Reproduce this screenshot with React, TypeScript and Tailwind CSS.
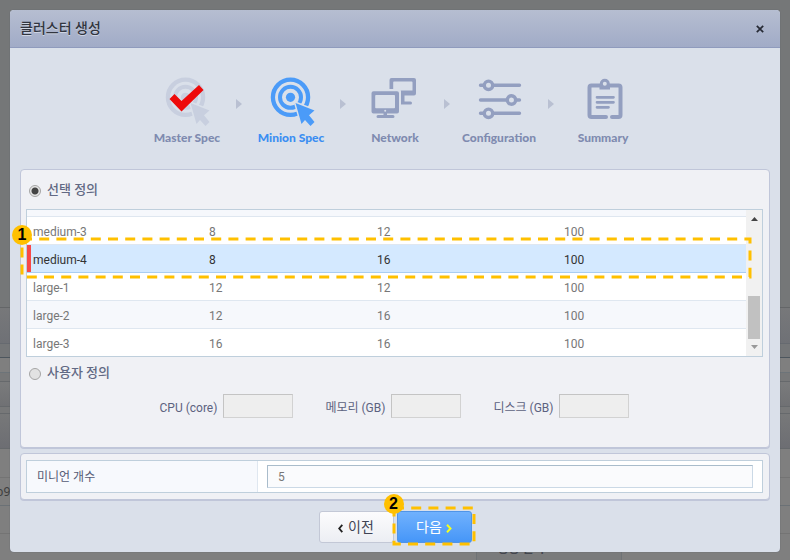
import React from "react";

const TEXT = "font-['Roboto','Noto_Sans_CJK_KR',sans-serif]";
const BG = "#dae0ea";

function Target({ color }: { color: string }) {
  return (
    <>
      <circle cx="23.5" cy="21.3" r="17.6" fill="none" stroke={color} strokeWidth="4.3" />
      <circle cx="23.5" cy="21.3" r="10.5" fill="none" stroke={color} strokeWidth="4" />
      <circle cx="23.5" cy="21.3" r="4.6" fill={color} />
      <path
        d="M28.5 27 47.5 34.5 42 39.3 47.5 46 43.5 50 38 44 34.5 48Z"
        fill={color}
        stroke={BG}
        strokeWidth="3"
        paintOrder="stroke"
      />
    </>
  );
}

function MasterIcon() {
  return (
    <g transform="translate(-1 0)">
      <Target color="#c8cfdf" />
      <path d="M7.500 23 12.500 18 19.500 25 37 9 41.500 14 19.500 35.500Z" fill="#ee0a0a" />
    </g>
  );
}

function NetworkIcon() {
  return (
    <g fill="#939fc0">
      <path
        fillRule="evenodd"
        d="M20.500 2H43a2 2 0 0 1 2 2V17.500a2 2 0 0 1-2 2H20.500a2 2 0 0 1-2-2V4a2 2 0 0 1 2-2ZM23 5.500a.8.8 0 0 0-.8.8V14.500H41.500V6.300a.8.8 0 0 0-.8-.8Z"
      />
      <path d="M30 19H33.500V25.500H39.500a1.500 1.500 0 0 1 0 3H30Z" />
      <path d="M-1 13H27.500a2.500 2.500 0 0 1 2.500 2.500V39H-1Z" fill={BG} />
      <path
        fillRule="evenodd"
        d="M2.500 15.300H26a2 2 0 0 1 2 2V35.500a2 2 0 0 1-2 2H2.500a2 2 0 0 1-2-2V17.300a2 2 0 0 1 2-2ZM5 19a.8.8 0 0 0-.8.8V31.500a.8.8 0 0 0 .8.8H23.200a.8.8 0 0 0 .8-.8V19.800a.8.8 0 0 0-.8-.8Z"
      />
      <path d="M12.500 37H16V39H22a1.500 1.500 0 0 1 0 3H7a1.500 1.500 0 0 1 0-3H12.500Z" />
      <circle cx="14.200" cy="34.800" r="1" fill={BG} />
    </g>
  );
}

function ConfigurationIcon() {
  return (
    <g stroke="#939fc0" strokeWidth="3.4" strokeLinecap="round" fill={BG}>
      <path d="M5.500 9.300H44.500M5.500 24H44.500M5.500 37.300H44.500" />
      <circle cx="13.500" cy="9.300" r="4.200" />
      <circle cx="36.500" cy="24" r="4.200" />
      <circle cx="13.500" cy="37.300" r="4.200" />
    </g>
  );
}

function SummaryIcon() {
  return (
    <g stroke="#939fc0" fill="none" strokeLinecap="round">
      <path d="M27 41H12.500a2 2 0 0 1-2-2V11.500a2 2 0 0 1 2-2H39.500a2 2 0 0 1 2 2V39a2 2 0 0 1-2 2H33" strokeWidth="4" />
      <path d="M20.500 9.500H31V13.500H20.500Z" fill="#939fc0" stroke="none" />
      <circle cx="25.800" cy="7.800" r="3.500" strokeWidth="3" fill={BG} />
      <path d="M18 21.300H34.500M18 26.300H34.500M18 31.300H29.500" strokeWidth="2.700" />
    </g>
  );
}

const steps = [
  { label: "Master Spec", icon: <MasterIcon />, active: false },
  { label: "Minion Spec", icon: <Target color="#4b9bf8" />, active: true },
  { label: "Network", icon: <NetworkIcon />, active: false },
  { label: "Configuration", icon: <ConfigurationIcon />, active: false },
  { label: "Summary", icon: <SummaryIcon />, active: false },
];

function Steps() {
  return (
    <ol className="flex justify-center pt-7 pb-[23px]">
      {steps.map((step, i) => (
        <React.Fragment key={step.label}>
          {i > 0 && (
            <li aria-hidden="true" className="flex w-[6px] shrink-0 pt-[23px]">
              <svg width="6" height="10" viewBox="0 0 6 10">
                <path d="M0 0 6 5 0 10Z" fill="#b9c0d2" />
              </svg>
            </li>
          )}
          <li
            aria-current={step.active ? "step" : undefined}
            className={`flex w-[98px] shrink-0 flex-col items-center gap-1 font-['Lato',sans-serif] text-[12px] leading-4 font-black ${
              step.active ? "text-[#3b8ef2]" : "text-[#7f8bb0]"
            }`}
          >
            <svg width="48" height="50" viewBox="0 0 48 50" className="overflow-visible">
              {step.icon}
            </svg>
            {step.label}
          </li>
        </React.Fragment>
      ))}
    </ol>
  );
}

function Callout({ n, className }: { n: number; className: string }) {
  return (
    <div className={`pointer-events-none absolute ${className}`}>
      <svg className="block h-full w-full overflow-visible">
        <rect width="100%" height="100%" fill="none" stroke="#ffc000" strokeWidth="3" strokeDasharray="10 7.2" />
      </svg>
      <span className="absolute -top-[14px] -left-[10px] flex size-5 items-center justify-center rounded-full bg-[#ffc000] font-['Liberation_Sans',sans-serif] text-[16px] leading-5 font-bold text-black">
        {n}
      </span>
    </div>
  );
}

const specs = [
  ["medium-3", 8, 12, 100],
  ["medium-4", 8, 16, 100],
  ["large-1", 12, 12, 100],
  ["large-2", 12, 16, 100],
  ["large-3", 16, 16, 100],
];

function rowStyle(i: number) {
  if (i === 1) return "border-[#a9cdf2] bg-[#d4e9ff] text-[#333]";
  return i === 3 ? "border-[#dfe7f0] bg-[#f6f8fc] text-[#777]" : "border-[#dfe7f0] bg-white text-[#777]";
}

function SpecList() {
  return (
    <div className="relative">
      <div className="flex h-[148px] overflow-hidden border border-[#bfcfdc] bg-white">
        <div className="flex-1">
          <div className="h-[7px] border-b border-[#dfe7f0] bg-[#f6f8fc]" />
          <table className="w-full table-fixed border-separate border-spacing-0 text-left text-[12px]">
            <colgroup>
              <col className="w-[176px]" />
              <col className="w-[168px]" />
              <col className="w-[187px]" />
              <col />
            </colgroup>
            <tbody>
              {specs.map((row, i) => (
                <tr key={row[0]} aria-selected={i === 1}>
                  {row.map((cell, j) => (
                    <td
                      key={j}
                      className={`h-7 border-b p-0 pt-[2px] pl-[6px] ${rowStyle(i)} ${
                        i === 1 && j === 0 ? "shadow-[inset_4px_0_0_#f84848]" : ""
                      }`}
                    >
                      {cell}
                    </td>
                  ))}
                </tr>
              ))}
            </tbody>
          </table>
        </div>
        <div aria-hidden="true" className="flex w-4 flex-col items-center bg-[#f1f1f1] py-[7px]">
          <svg width="7" height="4" viewBox="0 0 7 4">
            <path d="M3.500 0 7 4H0Z" fill="#444" />
          </svg>
          <div className="mt-auto mb-[6px] h-[43px] w-3 bg-[#c1c1c1]" />
          <svg width="7" height="4" viewBox="0 0 7 4">
            <path d="M0 0H7L3.500 4Z" fill="#999" />
          </svg>
        </div>
      </div>
      <Callout n={1} className="top-[30px] right-[13px] -left-[4px] h-[38px]" />
    </div>
  );
}

function Mode({ label, checked, className }: { label: string; checked?: boolean; className: string }) {
  return (
    <label className={`flex items-center gap-[6px] pl-[3px] text-[13px] font-medium text-[#626984] ${className}`}>
      <input
        type="radio"
        name="mode"
        defaultChecked={checked}
        className="mt-[2px] size-3 appearance-none rounded-full border border-[#a5a5a5] bg-[#e2e2e2] checked:bg-[radial-gradient(circle,#444_0_3px,#e6e6e6_4px)]"
      />
      {label}
    </label>
  );
}

function SizeField({ label }: { label: string }) {
  return (
    <label className="flex items-center gap-[6px] text-[12px] text-[#5c6280]">
      <span className="pt-1">{label}</span>
      <input
        type="text"
        disabled
        className="h-6 w-[70px] border border-[#d2d2d2] border-t-[#c4c4c4] border-l-[#c4c4c4] bg-[#eeeeee]"
      />
    </label>
  );
}

function Backdrop() {
  return (
    <div
      aria-hidden="true"
      className="col-start-1 row-start-1 flex min-w-0 flex-col bg-[#7f7f7f] font-['Noto_Sans','Noto_Sans_CJK_KR',sans-serif]"
    >
      <div className="h-[307px] bg-[#757778]" />
      <div className="h-[36px] border-t border-[#646668] bg-linear-to-b from-[#77787a] to-[#6f7176]" />
      <div className="h-[15px] border-t border-b border-t-[#666a70] border-b-[#4d565e] bg-[#747678]" />
      <div className="h-[15px] border-b border-[#6d7479] bg-[#7f7f7f]" />
      <div className="h-[8px] bg-[#777879]" />
      <div className="h-[26px] border-t border-b border-[#66696c] bg-linear-to-b from-[#7a7b7c] to-[#707174]" />
      <div className="h-[6px] bg-[#777879]" />
      <div className="h-[36px] border-t border-b border-[#66696c] bg-linear-to-b from-[#777879] to-[#6d6e73]" />
      <div className="h-[29px] border-b border-[#747474]" />
      <div className="flex h-7 items-center overflow-hidden border-b border-[#6b7176] text-[12px] text-[#3d3d3d]">
        <span className="-ml-1">b9</span>
      </div>
      <div className="h-7 border-b border-[#747474]" />
      <div className="flex flex-1">
        <div className="w-[477px] border-r border-[#6f7376]" />
        <div className="flex w-[145px] items-center border-r border-[#6f7376] bg-[#7a7b7c] pt-1 pl-5 text-[12px] leading-4 font-bold text-[#43464f]">
          생성 일시
        </div>
      </div>
    </div>
  );
}

export default function App() {
  return (
    <div className={`grid min-h-screen ${TEXT}`}>
      <Backdrop />
      <main
        role="dialog"
        aria-labelledby="title"
        className="z-10 col-start-1 row-start-1 m-[10px] mb-2 self-start rounded-[4px] bg-[#dae0ea] shadow-[0_0_1px_#4b5160]"
      >
        <header className="flex h-[38px] items-center justify-between rounded-t-[4px] border-b border-[#8f9bbd] bg-linear-to-b from-[#b6bed1] to-[#a1abc7] px-[10px]">
          <h1 id="title" className="text-[14px] font-medium text-[#31353f] [text-shadow:0_1px_0_#cfd5e3]">
            클러스터 생성
          </h1>
          <button type="button" aria-label="닫기" className="flex w-5 justify-center">
            <svg width="8" height="8" viewBox="0 0 8 8">
              <path d="M.8.8 7.200 7.200M7.200.8.8 7.200" stroke="#262a35" strokeWidth="1.700" />
            </svg>
          </button>
        </header>

        <div className="px-[10px] pb-[9px]">
          <Steps />

          <section className="rounded-[4px] border border-[#c0c6d9] bg-[#f0f1f5] pr-[6px] pb-[29px] pl-[5px] shadow-[0_1px_0_#c0c6d9]">
            <Mode label="선택 정의" checked className="h-[39px]" />
            <SpecList />
            <Mode label="사용자 정의" className="h-[31px]" />
            <div className="flex justify-center gap-8 pt-[6px]">
              <SizeField label="CPU (core)" />
              <SizeField label="메모리 (GB)" />
              <SizeField label="디스크 (GB)" />
            </div>
          </section>

          <section className="mt-[5px] rounded-[4px] border border-[#c0c6d9] bg-[#f0f1f5] py-[6px] pr-[6px] pl-[5px] shadow-[0_1px_0_#c0c6d9]">
            <div className="flex border border-[#bfcfdc] bg-white">
              <label
                htmlFor="count"
                className="flex w-[231px] items-center border-r border-[#dfe7f0] bg-[#f7f9fd] pl-[10px] text-[12px] text-[#555b75]"
              >
                미니언 개수
              </label>
              <div className="flex flex-1 px-[9px] py-1">
                <input
                  id="count"
                  type="text"
                  defaultValue="5"
                  className="h-[23px] w-full border border-[#cbd9e6] border-t-[#a9bccb] border-l-[#a9bccb] bg-[#fafbfd] px-[10px] text-[12px] text-[#777]"
                />
              </div>
            </div>
          </section>

          <div className="mt-[11px] flex justify-center gap-[3px] text-[14px]">
            <button
              type="button"
              className="flex h-8 w-[75px] items-center justify-center gap-[5px] rounded-[3px] border border-[#c3c8d6] bg-linear-to-b from-[#fcfcfd] to-[#eceef3] text-[#3f4354]"
            >
              <svg width="5" height="9" viewBox="0 0 5 9" className="mt-[2px]">
                <path d="M4.300.8 1.200 4.500 4.300 8.200" fill="none" stroke="#222" strokeWidth="1.800" />
              </svg>
              이전
            </button>
            <div className="relative">
              <button
                type="button"
                className="flex h-8 w-[75px] items-center justify-center gap-1 rounded-[3px] border border-[#4f94e8] bg-linear-to-b from-[#70b1fd] to-[#4596f8] text-white"
              >
                다음
                <svg width="6" height="9" viewBox="0 0 6 9" className="mt-[2px]">
                  <path d="M1 .8 4.500 4.500 1 8.200" fill="none" stroke="#f4ff1e" strokeWidth="2" />
                </svg>
              </button>
              <Callout n={2} className="-top-[3px] -right-[2px] -bottom-[1px] -left-[3px]" />
            </div>
          </div>
        </div>
      </main>
    </div>
  );
}
